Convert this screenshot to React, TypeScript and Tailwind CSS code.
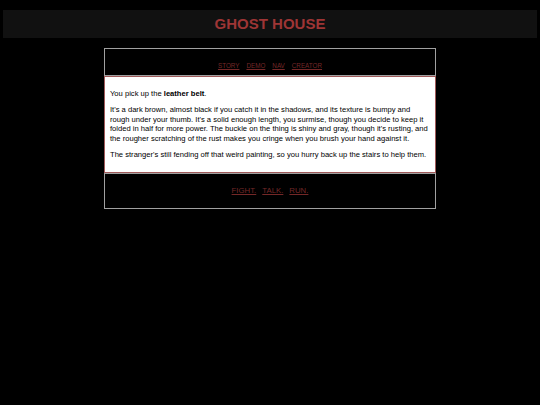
export default function App() {
  return (
    <div className="min-h-[405px] bg-black pt-[10px] font-['Liberation_Sans',Arial,sans-serif]">
      <div className="mx-[3px] flex h-[28px] items-center justify-center bg-[#111111] text-[15px] font-bold text-[#9e3535]">
        GHOST HOUSE
      </div>
      <div className="mx-auto mt-[10px] w-[332px]">
        <div className="flex h-[28px] items-end justify-center gap-[7px] border border-[#a0a0a0] pb-[5px] text-[6.3px] text-[#742828]">
          <a className="underline" href="#">STORY</a>
          <a className="underline" href="#">DEMO</a>
          <a className="underline" href="#">NAV</a>
          <a className="underline" href="#">CREATOR</a>
        </div>
        <div className="flex h-[97px] flex-col gap-[7px] border border-[#a05a5a] bg-white px-[5px] pt-[12px] text-[7.6px] leading-[9.4px] text-black">
          <p>
            You pick up the <b>leather belt</b>.
          </p>
          <p>
            It's a dark brown, almost black if you catch it in the shadows, and its texture is bumpy and rough under your thumb. It's a solid enough length, you surmise, though you decide to keep it folded in half for more power. The buckle on the thing is shiny and gray, though it's rusting, and the rougher scratching of the rust makes you cringe when you brush your hand against it.
          </p>
          <p>
            The stranger's still fending off that weird painting, so you hurry back up the stairs to help them.
          </p>
        </div>
        <div className="flex h-[36px] items-center justify-center gap-[6px] border border-[#a0a0a0] text-[7.8px] text-[#742828]">
          <a className="underline" href="#">FIGHT.</a>
          <a className="underline" href="#">TALK.</a>
          <a className="underline" href="#">RUN.</a>
        </div>
      </div>
    </div>
  );
}
